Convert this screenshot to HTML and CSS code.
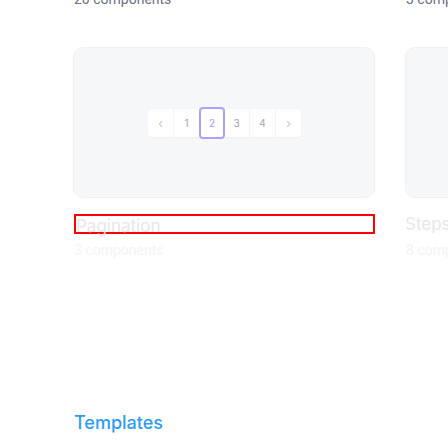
FILE: index.html
```html
<!DOCTYPE html>
<html>
<head>
<meta charset="utf-8">
<link rel="stylesheet" href="styles.css">
</head>
<body>
<div class="page">
  <div class="row prev-row">
    <div class="item"><div class="sub dark">20 components</div></div>
    <div class="item"><div class="sub dark">3 components</div></div>
  </div>
  <div class="row cards-row">
    <div class="item">
      <div class="card">
        <div class="pager">
          <span class="cell arrow">&#8249;</span>
          <span class="cell">1</span>
          <span class="cell active">2</span>
          <span class="cell">3</span>
          <span class="cell">4</span>
          <span class="cell arrow last">&#8250;</span>
        </div>
      </div>
      <div class="title outlined">Pagination</div>
      <div class="sub faint">3 components</div>
    </div>
    <div class="item">
      <div class="card"></div>
      <div class="title">Steps</div>
      <div class="sub faint">8 components</div>
    </div>
  </div>
  <h2 class="section">Templates</h2>
</div>
</body>
</html>
```
FILE: styles.css
```css
html, body {
  margin: 0;
  padding: 0;
  background: #ffffff;
  overflow: hidden;
}
.page {
  width: 448px;
  height: 448px;
  overflow: hidden;
  box-sizing: border-box;
  padding-left: 73px;
  font-family: Inter, "Noto Sans", sans-serif;
}
.row {
  display: flex;
  gap: 30px;
  width: 700px;
}
.item {
  width: 302px;
  flex: none;
}
.prev-row {
  margin-top: -11px;
  height: 21px;
}
.sub {
  font-family: Roboto, sans-serif;
  font-size: 14px;
  line-height: 20px;
  padding-left: 1px;
}
.sub.dark {
  color: #6b7280;
}
.sub.faint {
  color: #f3f4f6;
  margin-top: 6px;
}
.cards-row {
  margin-top: 37px;
}
.card {
  height: 151px;
  box-sizing: border-box;
  border: 1px solid #eef0f2;
  border-radius: 10px;
  background: #f6f7f9;
  display: flex;
  align-items: center;
  justify-content: center;
}
.pager {
  display: flex;
  align-items: stretch;
  background: #ffffff;
  border-radius: 4px;
  box-shadow: 0 1px 2px rgba(0, 0, 0, 0.04);
  height: 28px;
  margin-left: 1px;
}
.cell {
  width: 25px;
  display: flex;
  align-items: center;
  justify-content: center;
  font-size: 10px;
  line-height: 12px;
  color: #a3a6ad;
  border-right: 1px solid #f3f4f6;
}
.cell.arrow {
  color: #c8cad0;
  font-size: 13px;
}
.cell.last {
  border-right: none;
}
.cell.active {
  color: #a5a0f5;
  width: 26px;
  margin: -2px -1px;
  border-right: none;
  border-radius: 4px;
  box-shadow: inset 0 0 0 2px #a9a4fb;
  background: #ffffff;
}
.title {
  margin-top: 16px;
  font-size: 17px;
  line-height: 16px;
  height: 20px;
  color: #e6e7eb;
  box-sizing: border-box;
  padding-top: 2px;
}
.title.outlined {
  border: 2px solid #ff0000;
  margin-left: 1px;
  width: 301px;
}
.section {
  margin: 152px 0 0 1px;
  font-size: 18px;
  font-weight: 500;
  line-height: 22px;
  color: #2c9cf2;
}
```
